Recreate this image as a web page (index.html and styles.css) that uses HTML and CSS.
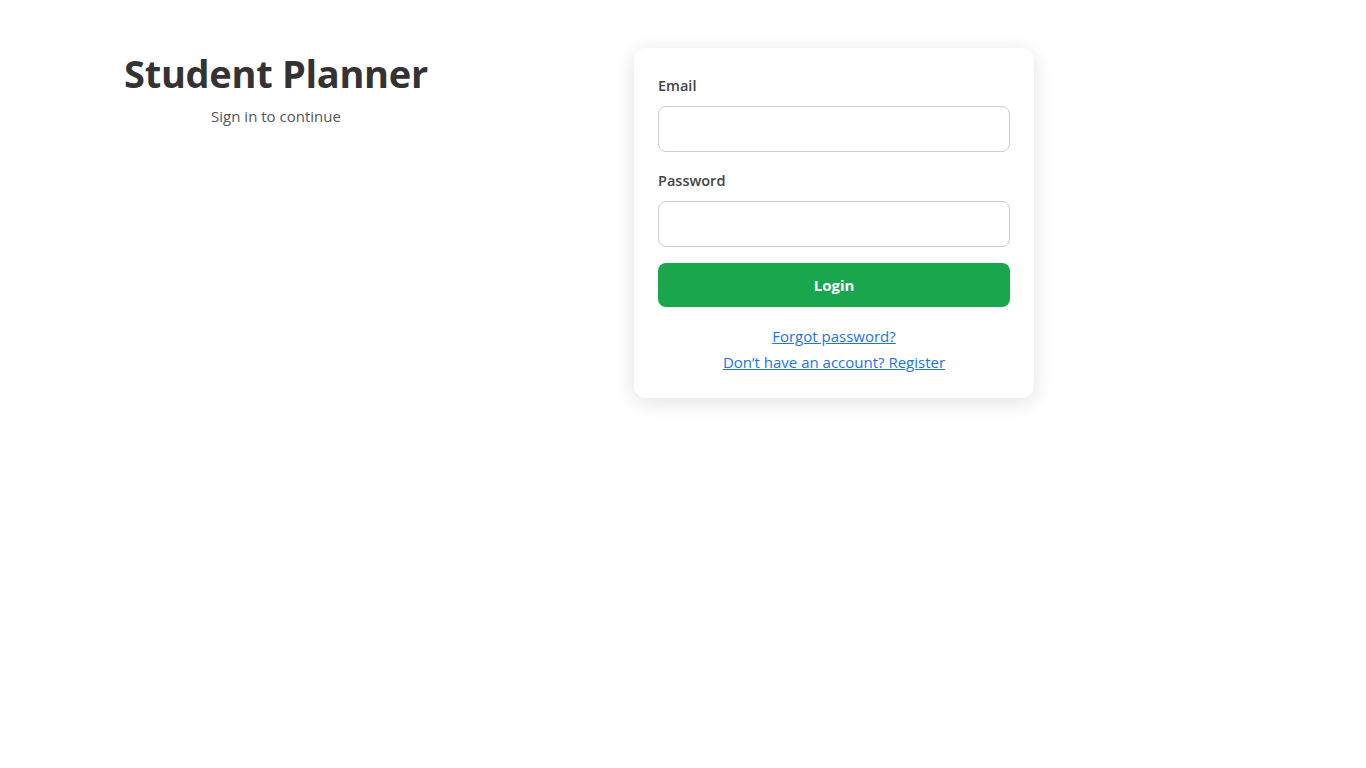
FILE: index.html
```html
<!DOCTYPE html>
<html lang="en">
<head>
<meta charset="utf-8">
<title>Student Planner - Login</title>
<link rel="stylesheet" href="styles.css">
</head>
<body>
<main class="page">
  <section class="intro">
    <h1 class="title">Student Planner</h1>
    <p class="subtitle">Sign in to continue</p>
  </section>
  <form class="card">
    <label class="label" for="email">Email</label>
    <input class="field" id="email" type="email">
    <label class="label" for="password">Password</label>
    <input class="field" id="password" type="password">
    <button class="btn" type="button">Login</button>
    <div class="links">
      <a href="#" class="link">Forgot password?</a>
      <a href="#" class="link">Don’t have an account? Register</a>
    </div>
  </form>
</main>
</body>
</html>
```
FILE: styles.css
```css
* { box-sizing: border-box; }
html, body { margin: 0; padding: 0; background: #fff; }
body {
  min-height: 100vh;
  font-family: "Open Sans", "Noto Sans", "Liberation Sans", sans-serif;
  color: #333;
}
.page {
  display: flex;
  align-items: flex-start;
  padding-top: 48px;
  padding-bottom: 40px;
}
.intro {
  width: 552px;
  text-align: center;
}
.title {
  margin: 0;
  font-size: 38px;
  line-height: 50px;
  font-weight: 700;
  color: #333;
  letter-spacing: -0.3px;
}
.subtitle {
  margin: 8px 0 0;
  font-size: 15px;
  line-height: 20px;
  color: #555;
}
.card {
  margin-left: 82px;
  width: 400px;
  background: #fff;
  border-radius: 12px;
  box-shadow: 0 4px 20px rgba(0, 0, 0, 0.12);
  padding: 27px 24px 25px;
  display: flex;
  flex-direction: column;
}
.label {
  font-size: 14.5px;
  font-weight: 600;
  color: #444;
  line-height: 22px;
  margin-bottom: 9px;
}
.field {
  height: 46px;
  width: 100%;
  border: 1px solid #ccc;
  border-radius: 8px;
  font: inherit;
  padding: 0 12px;
  margin-bottom: 18px;
}
#password { margin-bottom: 16px; }
.btn {
  height: 44px;
  border: 0;
  border-radius: 8px;
  background: #1aa64d;
  color: #fff;
  font-family: inherit;
  font-size: 15px;
  font-weight: 700;
}
.links {
  margin-top: 18px;
  display: flex;
  flex-direction: column;
  align-items: center;
  gap: 4px;
}
.link {
  color: #1a73e8;
  font-size: 15px;
  line-height: 22px;
  text-decoration: underline;
}
```
